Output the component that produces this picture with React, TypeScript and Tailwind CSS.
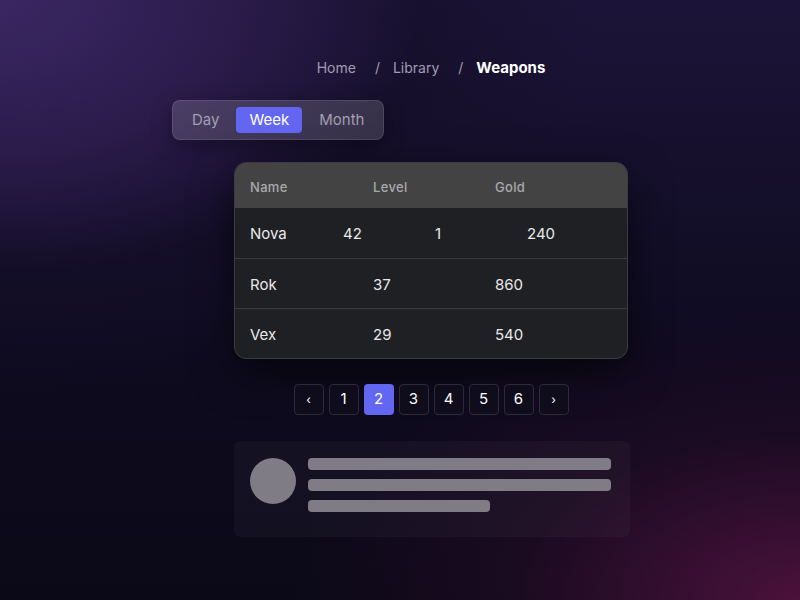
import React from "react";

const font = { fontFamily: "Inter, 'Noto Sans', sans-serif" };

const CRUMBS = ["Home", "Library", "Weapons"];
const RANGES = ["Day", "Week", "Month"];

// first row carries an extra cell, so it gets its own track widths
const ROWS = [
  { cells: ["Nova", "42", "1", "240"], cols: "grid-cols-[93px_92px_92px_1fr]" },
  { cells: ["Rok", "37", "860"], cols: "grid-cols-[123px_122px_1fr]" },
  { cells: ["Vex", "29", "540"], cols: "grid-cols-[123px_122px_1fr]" },
];

const PAGES = ["‹", "1", "2", "3", "4", "5", "6", "›"];

function Breadcrumb() {
  return (
    <nav className="flex items-center justify-center gap-[13px] text-[14px] leading-none">
      {CRUMBS.map((c, i) => {
        const last = i === CRUMBS.length - 1;
        return (
          <React.Fragment key={c}>
            {i > 0 && <span className="pl-1.5 text-[#a29cb3]">/</span>}
            <span className={last ? "text-[15px] font-bold text-white" : "text-[#a29cb3]"}>{c}</span>
          </React.Fragment>
        );
      })}
    </nav>
  );
}

function RangeToggle() {
  return (
    <div className="flex w-fit gap-1 rounded-lg border border-white/10 bg-white/15 p-1.5 shadow-[0_6px_20px_rgba(0,0,0,0.35)]">
      {RANGES.map((r) => (
        <button
          key={r}
          className={
            r === "Week"
              ? "h-[26px] rounded bg-[#6366f1] px-[13px] text-[15px] text-white"
              : "h-[26px] rounded px-[13px] text-[15px] text-[#a39eb0]"
          }
        >
          {r}
        </button>
      ))}
    </div>
  );
}

function PlayerTable() {
  return (
    <div className="w-[394px] overflow-hidden rounded-xl border border-[#3b3b40] bg-[#1f2023] shadow-[0_14px_40px_rgba(0,0,0,0.6)]">
      <div className="grid h-[45px] grid-cols-[123px_122px_1fr] items-center bg-[#434343] pl-[15px] pt-1 text-[13px] font-medium tracking-wide text-[#a9a9ad]">
        <span>Name</span>
        <span>Level</span>
        <span>Gold</span>
      </div>
      {ROWS.map((row, i) => (
        <div
          key={row.cells[0]}
          className={`grid h-[50px] items-center pl-[15px] pt-[3px] text-[15px] text-[#e9e9ec] ${row.cols} ${
            i > 0 ? "border-t border-[#3a3b40]" : ""
          }`}
        >
          {row.cells.map((c, j) => (
            <span key={j}>{c}</span>
          ))}
        </div>
      ))}
    </div>
  );
}

function Pagination() {
  return (
    <div className="flex justify-center gap-[5px]">
      {PAGES.map((p) => {
        const arrow = p === "‹" || p === "›";
        return (
          <button
            key={p}
            className={
              p === "2"
                ? "flex h-[31px] w-[30px] items-center justify-center rounded bg-[#6366f1] text-[15px] text-white"
                : `flex h-[31px] w-[30px] items-center justify-center rounded border border-[#2e2a3c] bg-[#0f0c1c] text-white ${
                    arrow ? "text-[12px]" : "text-[15px]"
                  }`
            }
          >
            {p}
          </button>
        );
      })}
    </div>
  );
}

function SkeletonCard() {
  return (
    <div className="flex h-[96px] w-[396px] gap-3 rounded-md bg-white/[0.03] px-4 pt-[17px]">
      <div className="h-[46px] w-[46px] shrink-0 rounded-full bg-[#807c86]" />
      <div className="flex flex-1 flex-col gap-[9px] pr-[3px]">
        <div className="h-3 w-full rounded bg-[#807c86]" />
        <div className="h-3 w-full rounded bg-[#807c86]" />
        <div className="h-3 w-[60%] rounded bg-[#807c86]" />
      </div>
    </div>
  );
}

export default function App() {
  return (
    <div
      style={font}
      className="h-[600px] w-[800px] overflow-hidden bg-[#0b0917] bg-[radial-gradient(ellipse_90%_70%_at_100%_100%,rgba(78,18,62,0.95)_0%,rgba(40,12,40,0.5)_40%,transparent_70%),radial-gradient(ellipse_75%_65%_at_0%_0%,#3b2763_0%,#2a1b4a_40%,rgba(20,14,40,0.6)_70%,transparent_100%),linear-gradient(180deg,#1c1438_0%,#0e0b1f_60%,#0b0917_100%)]"
    >
      <div className="flex flex-col items-start pl-[234px] pt-[60px]">
        <div className="w-[394px]">
          <Breadcrumb />
        </div>
        <div className="-ml-[62px] mt-[25px]">
          <RangeToggle />
        </div>
        <div className="mt-[22px]">
          <PlayerTable />
        </div>
        <div className="mt-[25px] w-[394px]">
          <Pagination />
        </div>
        <div className="mt-[26px]">
          <SkeletonCard />
        </div>
      </div>
    </div>
  );
}
